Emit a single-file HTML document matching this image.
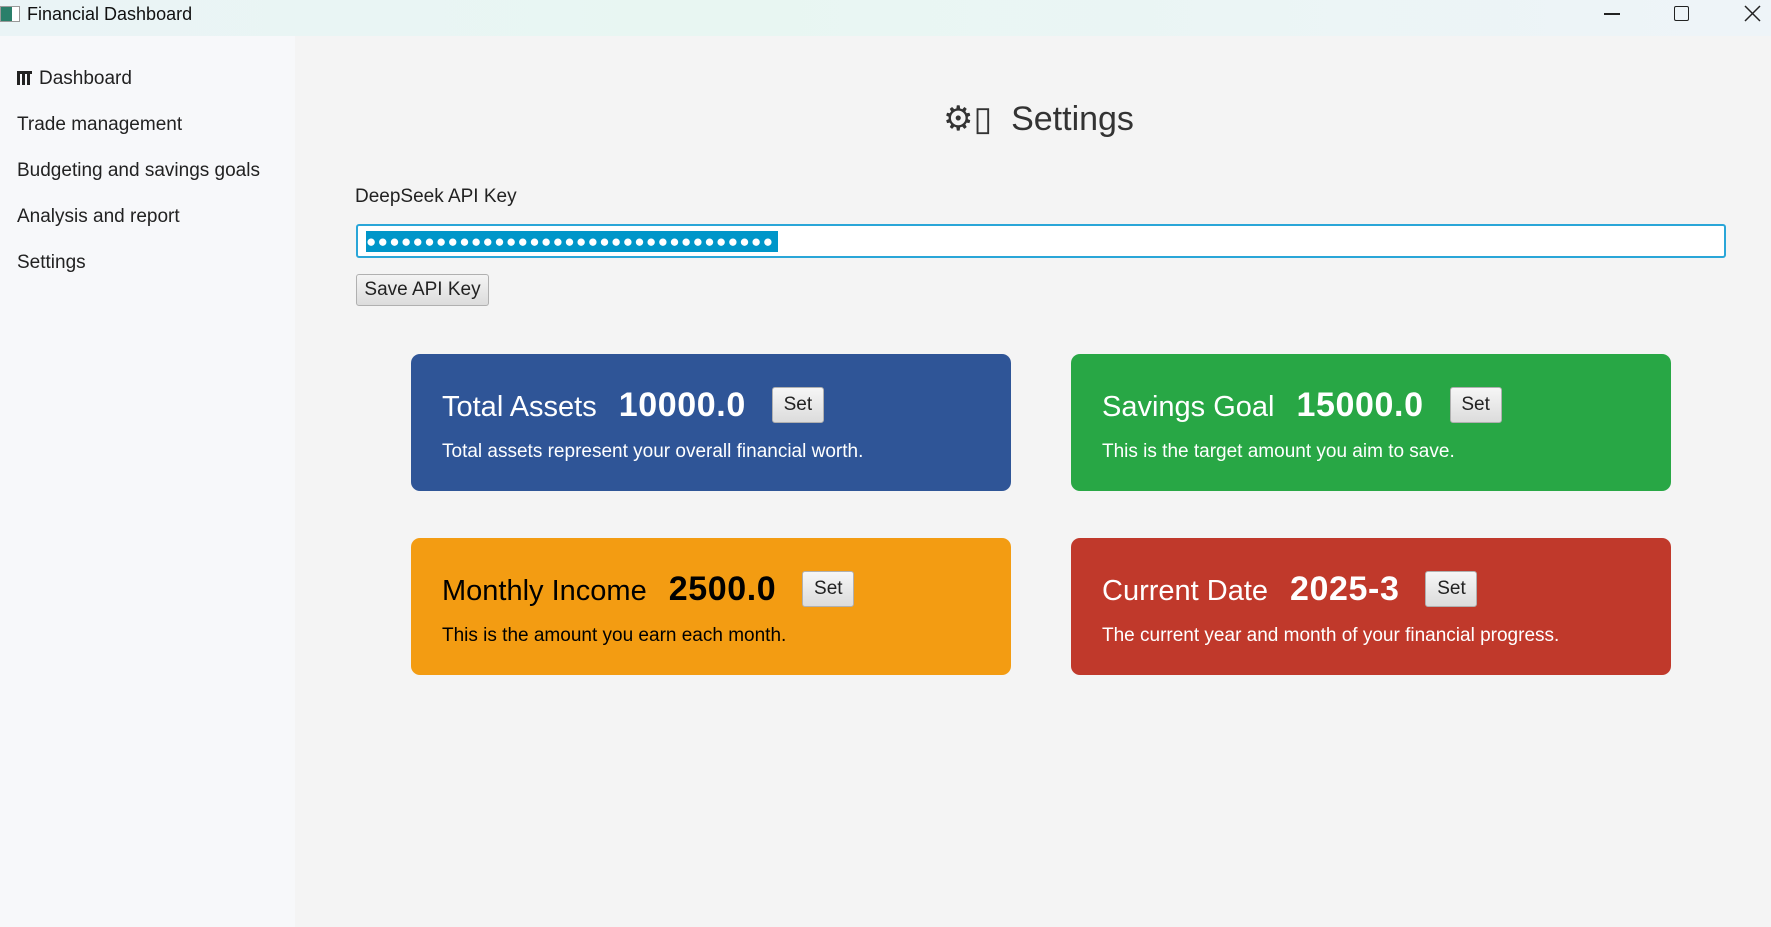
<!DOCTYPE html>
<html><head><meta charset="utf-8"><style>
*{margin:0;padding:0;box-sizing:border-box}
body{width:1771px;height:927px;overflow:hidden;font-family:"Liberation Sans",sans-serif;background:#f4f4f4;position:relative;color:#222}
.tb{position:absolute;left:0;top:0;width:1771px;height:36px;background:linear-gradient(90deg,#eaf4f6,#e8f6f2 40%,#eef4f8);}
.tb .t{position:absolute;left:27px;top:4px;font-size:18px;color:#111}
.side{position:absolute;left:0;top:36px;width:295px;height:891px;background:#f7f8fa}
.nav{position:absolute;left:17px;font-size:19px;color:#222}
.abs{position:absolute}
.card{position:absolute;width:600px;height:137px;border-radius:9px}
.card .ti{position:absolute;left:31px;top:32px;font-size:29px;white-space:nowrap}
.card .ti b{font-size:34px;margin-left:22px;letter-spacing:0.6px}
.card .d{position:absolute;left:31px;top:87px;font-size:19px}
.set{display:inline-block;vertical-align:6px;margin-left:26px;width:52px;height:36px;border:1px solid #b0b0b0;border-radius:3px;background:linear-gradient(#f6f6f6,#dcdcdc);color:#222;font-size:19px;font-weight:normal;letter-spacing:0;text-align:center;line-height:34px}
</style></head><body>
<div class="tb">
<div class="abs" style="left:0;top:6px;width:20px;height:16px;border:1px solid #999;background:linear-gradient(90deg,#2a7f6a 60%,#fff 60%)"></div>
<div class="t">Financial Dashboard</div>
<div class="abs" style="left:1604px;top:13px;width:16px;height:1.5px;background:#222"></div>
<div class="abs" style="left:1674px;top:6px;width:15px;height:15px;border:1.5px solid #222;border-radius:2px"></div>
<svg class="abs" style="left:1744px;top:5px" width="17" height="17"><path d="M1 1L16 16M16 1L1 16" stroke="#222" stroke-width="1.5"/></svg>
</div>
<div class="side">
<div class="nav" style="top:32px"><span style="display:inline-block;width:15px;height:14px;vertical-align:-1px;margin-right:7px;border-top:3px solid #222;background:repeating-linear-gradient(90deg,#222 0 3px,#f7f8fa 3px 5px)"></span>Dashboard</div>
<div class="nav" style="top:78px">Trade management</div>
<div class="nav" style="top:124px">Budgeting and savings goals</div>
<div class="nav" style="top:170px">Analysis and report</div>
<div class="nav" style="top:216px">Settings</div>
</div>
<div class="abs" style="left:943px;top:99px;font-size:34px;color:#333;white-space:nowrap">⚙▯&nbsp; Settings</div>
<div class="abs" style="left:355px;top:186px;font-size:19px;color:#222">DeepSeek API Key</div>
<div class="abs" style="left:356px;top:224px;width:1370px;height:34px;border:2px solid #2aa6d8;border-radius:3px;background:#fff">
<div class="abs" style="left:8px;top:5px;width:412px;height:21px;background:#0096c9;color:#fff;font-size:17px;line-height:21px;letter-spacing:1.4px;overflow:hidden;white-space:nowrap">●●●●●●●●●●●●●●●●●●●●●●●●●●●●●●●●●●●</div>
</div>
<div class="abs" style="left:356px;top:274px;width:133px;height:32px;border:1px solid #b0b0b0;border-radius:3px;background:linear-gradient(#f4f4f4,#dcdcdc);font-size:19px;text-align:center;line-height:30px">Save API Key</div>

<div class="card" style="left:411px;top:354px;background:#2f5597;color:#fff">
<div class="ti">Total Assets<b>10000.0</b><span class="set">Set</span></div>
<div class="d">Total assets represent your overall financial worth.</div></div>
<div class="card" style="left:1071px;top:354px;background:#28a745;color:#fff">
<div class="ti">Savings Goal<b>15000.0</b><span class="set">Set</span></div>
<div class="d">This is the target amount you aim to save.</div></div>
<div class="card" style="left:411px;top:538px;background:#f39c12;color:#000">
<div class="ti">Monthly Income<b>2500.0</b><span class="set">Set</span></div>
<div class="d">This is the amount you earn each month.</div></div>
<div class="card" style="left:1071px;top:538px;background:#c0392b;color:#fff">
<div class="ti">Current Date<b>2025-3</b><span class="set">Set</span></div>
<div class="d">The current year and month of your financial progress.</div></div>
</body></html>
